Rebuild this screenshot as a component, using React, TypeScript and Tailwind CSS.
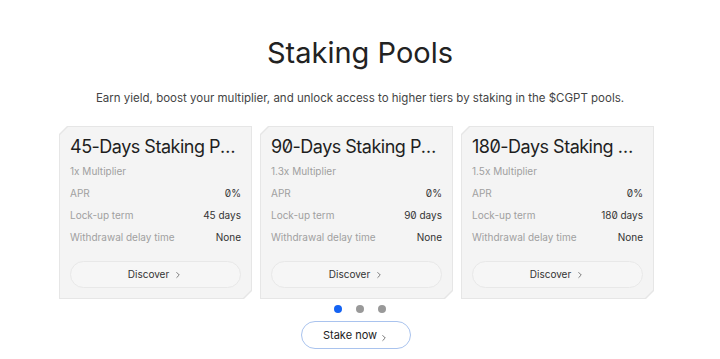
import { ChevronRight } from 'lucide-react';

const pools = [
    { days: 45, multiplier: '1x' },
    { days: 90, multiplier: '1.3x' },
    { days: 180, multiplier: '1.5x' },
];

const chamfer = '[clip-path:polygon(8px_0,100%_0,100%_calc(100%-8px),calc(100%-8px)_100%,0_100%,0_8px)]';

function PoolCard({ days, multiplier }: { days: number; multiplier: string }) {
    return (
        <div className={`w-[193px] shrink-0 bg-[#e6e6e6] p-px ${chamfer}`}>
            <div className={`bg-[#f4f4f4] px-[10px] pt-[8px] pb-[10px] ${chamfer}`}>
                <h3 className="truncate text-[18px] leading-[24px] tracking-[-0.5px] text-[#1e1e1e]">{days}-Days Staking Pool</h3>
                <div className="mt-[5px] text-[10px] leading-[14px] text-[#a0a0a0]">{multiplier} Multiplier</div>
                <div className="mt-[8px] space-y-[8px] text-[10px] leading-[14px]">
                    <div className="flex justify-between">
                        <span className="text-[#a0a0a0]">APR</span>
                        <span className="text-[#333]">0%</span>
                    </div>
                    <div className="flex justify-between">
                        <span className="text-[#a0a0a0]">Lock-up term</span>
                        <span className="text-[#333]">{days} days</span>
                    </div>
                    <div className="flex justify-between">
                        <span className="text-[#a0a0a0]">Withdrawal delay time</span>
                        <span className="text-[#333]">None</span>
                    </div>
                </div>
                <button className="mt-[17px] flex h-[27px] w-full items-center justify-center gap-[4px] rounded-full border border-[#e8e8e8] bg-[#f6f6f6] text-[10px] text-[#333]">
                    Discover
                    <ChevronRight size={10} strokeWidth={1.5} />
                </button>
            </div>
        </div>
    );
}

export default function App() {
    return (
        <div className="min-h-screen bg-white font-['Inter',sans-serif] slashed-zero">
            <div className="flex flex-col items-center pt-[35px]">
                <h1 className="text-[29px] leading-[36px] text-[#222]">Staking Pools</h1>
                <p className="mt-[19px] text-[11.5px] leading-[16px] text-[#444]">
                    Earn yield, boost your multiplier, and unlock access to higher tiers by staking in the $CGPT pools.
                </p>
            </div>

            <div className="mt-[20px] flex gap-[8px] pl-[59px]">
                {pools.map(p => (
                    <PoolCard key={p.days} days={p.days} multiplier={p.multiplier} />
                ))}
            </div>

            <div className="mt-[6px] flex justify-center gap-[14px]">
                <span className="h-[8px] w-[8px] rounded-full bg-[#1463f3]" />
                <span className="h-[8px] w-[8px] rounded-full bg-[#999]" />
                <span className="h-[8px] w-[8px] rounded-full bg-[#999]" />
            </div>

            <div className="mt-[8px] flex justify-center pr-[8px]">
                <button className="flex h-[28px] w-[110px] items-center justify-center gap-[2px] rounded-full border border-[#a9c3ee] text-[11px] text-[#222]">
                    Stake now
                    <ChevronRight size={10} strokeWidth={1.5} className="mt-[6px]" />
                </button>
            </div>
        </div>
    );
}
